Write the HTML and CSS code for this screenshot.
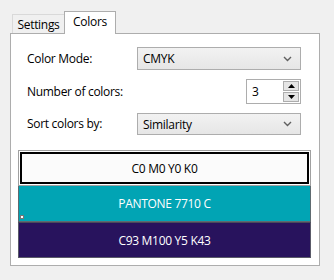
FILE: index.html
```html
<!DOCTYPE html>
<html>
<head>
<meta charset="utf-8">
<link rel="stylesheet" href="styles.css">
</head>
<body>
<div class="tabs">
  <div class="tab tab-inactive">Settings</div>
  <div class="tab tab-active">Colors</div>
</div>
<div class="panel">
  <div class="form">
    <div class="label">Color Mode:</div>
    <div class="combo"><span>CMYK</span>
      <svg class="chev" width="9" height="6" viewBox="0 0 9 6"><path d="M1 1 L4.5 4.5 L8 1" fill="none" stroke="#606060" stroke-width="1.4"/></svg>
    </div>
    <div class="label">Number of colors:</div>
    <div class="spin">
      <span class="spin-val">3</span>
      <div class="spin-btns">
        <div class="spin-btn"><svg width="7" height="4" viewBox="0 0 7 4"><path d="M0 4 L3.5 0 L7 4 Z" fill="#000"/></svg></div>
        <div class="spin-btn"><svg width="7" height="4" viewBox="0 0 7 4"><path d="M0 0 L3.5 4 L7 0 Z" fill="#000"/></svg></div>
      </div>
    </div>
    <div class="label">Sort colors by:</div>
    <div class="combo combo-sort"><span>Similarity</span>
      <svg class="chev" width="9" height="6" viewBox="0 0 9 6"><path d="M1 1 L4.5 4.5 L8 1" fill="none" stroke="#606060" stroke-width="1.4"/></svg>
    </div>
  </div>
  <div class="swatches">
    <div class="swatch swatch-white"><div class="swatch-inner">C0 M0 Y0 K0</div></div>
    <div class="swatch swatch-teal">PANTONE 7710 C<span class="marker"></span></div>
    <div class="swatch swatch-purple">C93 M100 Y5 K43</div>
  </div>
</div>
</body>
</html>
```

FILE: styles.css
```css
* { box-sizing: border-box; }
html, body { margin: 0; padding: 0; }
body {
  background: #f0f0f0;
  width: 334px;
  height: 280px;
  padding: 11px 0 0 10px;
  font-family: "Open Sans", "Noto Sans", sans-serif;
  font-size: 12px;
  letter-spacing: -0.3px;
  color: #000;
  overflow: hidden;
}
.tabs {
  display: flex;
  align-items: flex-end;
  height: 22px;
  padding-left: 2px;
  position: relative;
  z-index: 2;
}
.tab {
  display: flex;
  align-items: center;
  justify-content: center;
  border: 1px solid #d9d9d9;
  border-bottom: none;
}
.tab-inactive {
  width: 52px;
  height: 19px;
  background: #f0f0f0;
  border-color: #d9d9d9;
  border-right: none;
  padding-top: 1px;
}
.tab-active {
  width: 52px;
  height: 23px;
  margin-bottom: -1px;
  background: #fff;
  border-color: #adadad;
  padding-bottom: 4px;
}
.panel {
  width: 310px;
  height: 233px;
  background: #fff;
  border: 1px solid #adadad;
  padding: 13px 18px 0 16px;
  position: relative;
  z-index: 1;
}
.form {
  display: grid;
  grid-template-columns: 110px 1fr;
  grid-template-rows: 23px 25px 22px;
  row-gap: 9px;
  align-items: center;
}
.label { line-height: 16px; }
.combo {
  height: 23px;
  border: 1px solid #adadad;
  background: linear-gradient(#f2f2f2, #e6e6e6);
  display: flex;
  align-items: center;
  justify-content: space-between;
  padding: 0 8px 0 5px;
}
.combo-sort { height: 22px; }
.chev { display: block; }
.spin {
  justify-self: end;
  width: 55px;
  height: 25px;
  border: 1px solid #adadad;
  background: #fff;
  display: flex;
  align-items: center;
  justify-content: space-between;
  padding: 1px 1px 1px 5px;
}
.spin-btns {
  display: flex;
  flex-direction: column;
  gap: 1px;
  height: 100%;
}
.spin-btn {
  width: 16px;
  flex: 1;
  background: #e5e5e5;
  border: 1px solid #adadad;
  display: flex;
  align-items: center;
  justify-content: center;
}
.spin-btn svg { display: block; }
.swatches {
  margin: 15px 0 0 -9px;
  width: 293px;
  display: flex;
  flex-direction: column;
}
.swatch {
  height: 36px;
  display: flex;
  align-items: center;
  justify-content: center;
  position: relative;
}
.swatch-white {
  border: 1px solid #a0a0a0;
  padding: 1px;
  background: #fff;
}
.swatch-inner {
  width: 100%;
  height: 100%;
  border: 2px solid #000;
  display: flex;
  align-items: center;
  justify-content: center;
  background: #fbfbfb;
}
.swatch-teal {
  background: #01a4b4;
  color: #fff;
  border: 1px solid #5f6b70;
  border-top: none;
}
.swatch-purple {
  background: #28135d;
  color: #fff;
  border: 1px solid #5a5a68;
  border-top: 1px solid #4a4a5a;
}
.marker {
  position: absolute;
  left: 1px;
  bottom: 2px;
  width: 4px;
  height: 4px;
  background: #fff;
  border: 1px solid #777;
}
```
